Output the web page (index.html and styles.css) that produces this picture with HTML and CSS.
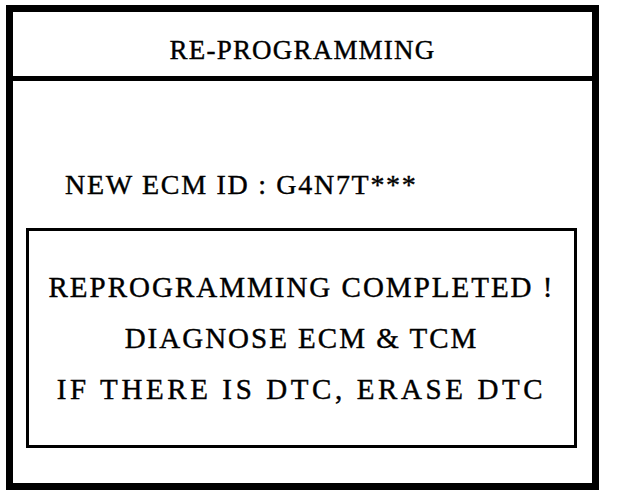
FILE: index.html
```html
<!DOCTYPE html>
<html lang="en">

<head>
    <meta charset="UTF-8">
    <meta name="viewport" content="width=device-width, initial-scale=1.0">
    <title>Re-programming</title>
    <link rel="stylesheet" href="styles.css">
</head>

<body>
    <div class="screen">
        <div class="screen-title">RE-PROGRAMMING</div>
        <div class="screen-body">
            <div class="ecm-id">NEW ECM ID : G4N7T***</div>
            <div class="message">
                <p>REPROGRAMMING COMPLETED !</p>
                <p>DIAGNOSE ECM &amp; TCM</p>
                <p class="wide">IF THERE IS DTC, ERASE DTC</p>
            </div>
        </div>
    </div>
</body>

</html>
```

FILE: styles.css
```css
* {
    margin: 0;
    padding: 0;
    box-sizing: border-box;
}

body {
    background-color: #fff;
    color: #000;
    font-family: "Liberation Serif", "Times New Roman", serif;
    -webkit-text-stroke: 0.4px #000;
}

.screen {
    margin: 5px 0 0 6px;
    width: 593px;
    height: 485px;
    border: 7px solid #000;
    display: flex;
    flex-direction: column;
}

.screen-title {
    height: 69px;
    padding-top: 12px;
    border-bottom: 5px solid #000;
    display: flex;
    align-items: center;
    justify-content: center;
    font-size: 27px;
    letter-spacing: 1.2px;
}

.screen-body {
    flex: 1;
    padding: 0 15px 0 13px;
}

.ecm-id {
    margin-top: 88px;
    padding-left: 39px;
    font-size: 28px;
    line-height: 32px;
    letter-spacing: 1.7px;
}

.message {
    margin-top: 27px;
    height: 220px;
    border: 3px solid #000;
    display: flex;
    flex-direction: column;
    justify-content: center;
    text-align: center;
    font-size: 29px;
    line-height: 51px;
    letter-spacing: 2px;
}

.message .wide {
    letter-spacing: 3.6px;
}
```
